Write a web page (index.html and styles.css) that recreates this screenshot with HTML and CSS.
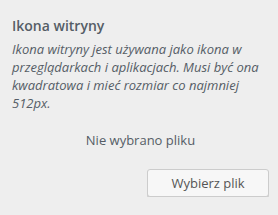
FILE: index.html
```html
<!DOCTYPE html>
<html lang="pl">
<head>
<meta charset="utf-8">
<link rel="stylesheet" href="styles.css">
</head>
<body>
<div class="control">
  <h3 class="title">Ikona witryny</h3>
  <p class="description">Ikona witryny jest używana jako ikona w przeglądarkach i aplikacjach. Musi być ona kwadratowa i mieć rozmiar co najmniej 512px.</p>
  <div class="placeholder">Nie wybrano pliku</div>
  <div class="actions">
    <button class="button" type="button">Wybierz plik</button>
  </div>
</div>
</body>
</html>
```
FILE: styles.css
```css
html, body {
  margin: 0;
  padding: 0;
  background: #eeeeee;
}
body {
  font-family: "Open Sans", "Liberation Sans", sans-serif;
  color: #555d66;
}
.control {
  padding: 14px 9px 0 12px;
}
.title {
  margin: 0;
  font-size: 14px;
  line-height: 24px;
  font-weight: 600;
  color: #555d66;
}
.description {
  margin: 2px 0 0;
  font-size: 13px;
  line-height: 18px;
  font-style: italic;
  color: #555d66;
}
.placeholder {
  margin-top: 18px;
  text-align: center;
  font-size: 13px;
  line-height: 20px;
  color: #555d66;
}
.actions {
  display: flex;
  justify-content: flex-end;
  margin-top: 19px;
}
.button {
  height: 28px;
  width: 122px;
  padding: 0 10px;
  font-family: inherit;
  font-size: 13px;
  line-height: 26px;
  color: #555;
  background: #f7f7f7;
  border: 1px solid #cccccc;
  border-radius: 3px;
  box-shadow: 0 1px 0 #cccccc;
}
```
